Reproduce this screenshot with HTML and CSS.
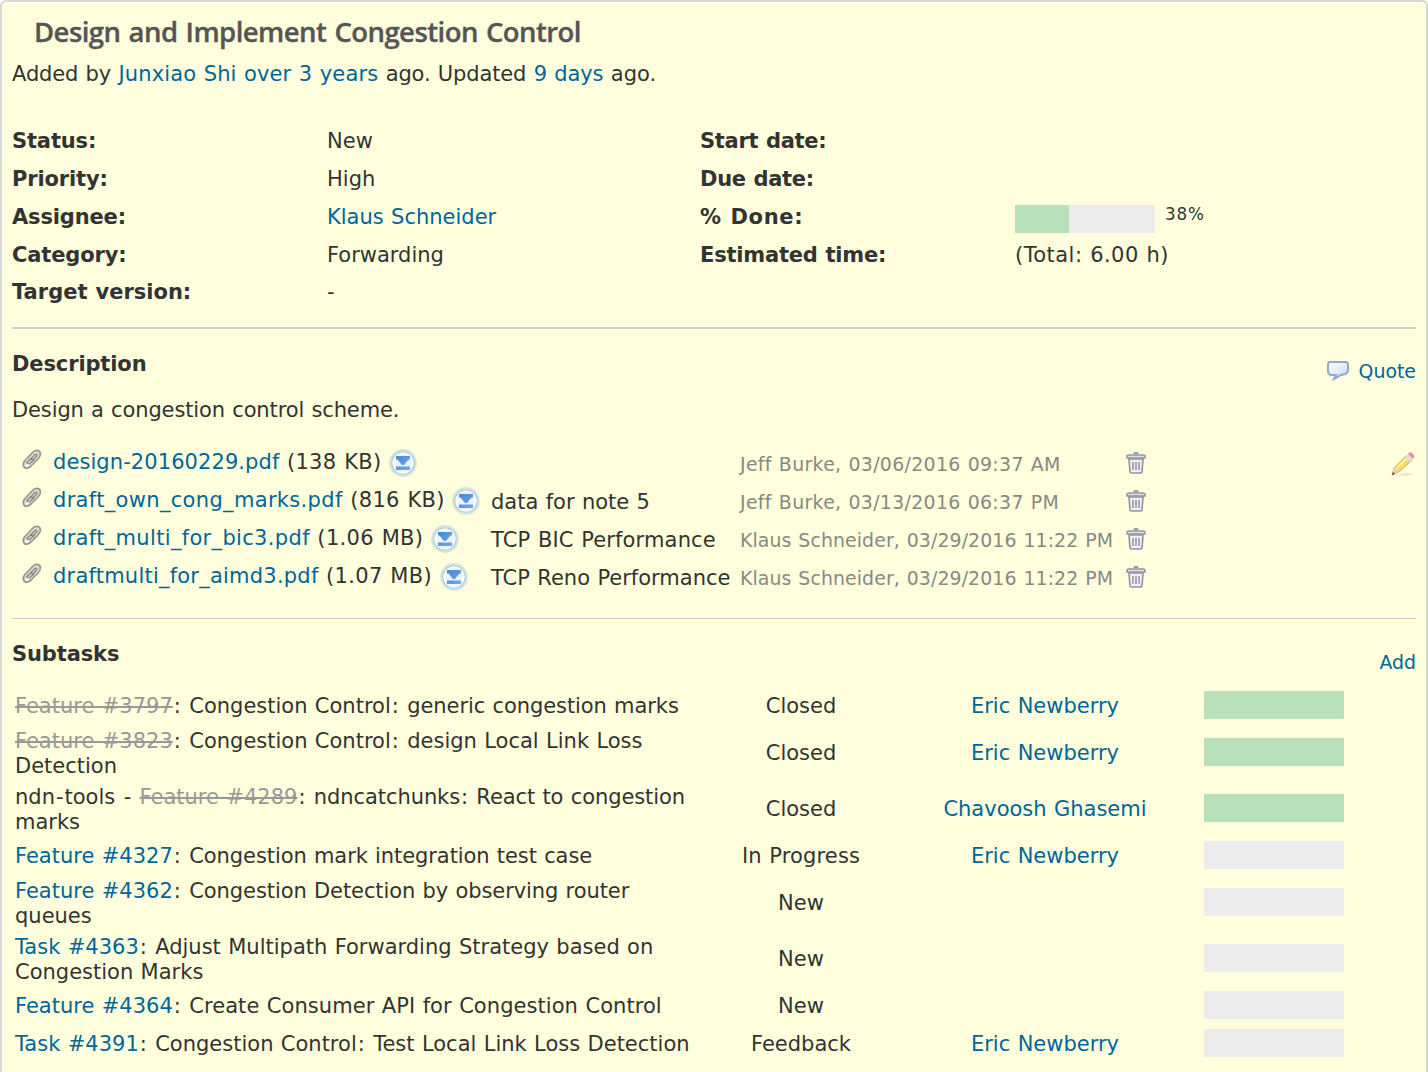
FILE: index.html
```html
<!DOCTYPE html>
<html lang="en">
<head>
<meta charset="utf-8">
<title>Design and Implement Congestion Control</title>
<link rel="stylesheet" href="styles.css">
</head>
<body>
<svg class="defs" aria-hidden="true">
  <defs>
    <linearGradient id="bubble-fill" x1="0" y1="0" x2="1" y2="1"><stop offset="0" stop-color="#fff"/><stop offset="1" stop-color="#c5dcff"/></linearGradient>
    <linearGradient id="arrow-fill" x1="0" y1="0" x2="1" y2="1"><stop offset="0" stop-color="#4388d5"/><stop offset="1" stop-color="#72aae8"/></linearGradient>
    <symbol id="clip" viewBox="0 0 20 22">
      <path d="M2.5 12 11 3Q13 1 16 1.5Q19 2.5 18.2 6Q18 8 16 10L9 17Q5 20.5 2.5 18.5Q0 16 2.5 12Z" fill="#dcdcd4" stroke="#969694" stroke-width="1.7"/>
      <path d="M4.5 14 13 5.5Q15.5 4.5 14.8 7L8.5 14Q5.5 16.5 5.5 13.5M9 9l3 3" fill="none" stroke="#858583" stroke-width="1.3"/>
      <path d="M3.5 17 7 16" stroke="#fff" stroke-width="2"/>
    </symbol>
    <symbol id="download" viewBox="0 0 28 28">
      <circle cx="14" cy="14" r="12.8" fill="#fff" stroke="#cfe6e3" stroke-width="2.2"/>
      <circle cx="14" cy="14" r="11.2" fill="#edf3ff" stroke="#b5c6d2" stroke-width="1.2"/>
      <circle cx="14" cy="14" r="9.8" fill="none" stroke="#fafcff" stroke-width="1.5"/>
      <path d="M7 7H21V10.5H19.5L15 16H13L8.5 10.5H7ZM7 17.6H21V21H7Z" fill="url(#arrow-fill)"/>
    </symbol>
    <symbol id="trash" viewBox="0 0 20 22">
      <path d="M3 7H17L16 20Q15.8 21 14 21H6Q4 21 4 20Z" fill="#f1f1f5" stroke="#9292a3" stroke-width="1.6"/>
      <path d="M1 6V4Q1 3 3 3H17Q19 3 19 4V6Z" fill="#dfdfe6" stroke="#9292a3" stroke-width="1.5"/>
      <path d="M8.5 2V1H11.5V2" fill="none" stroke="#888899" stroke-width="1.5"/>
      <path d="M7 10V18M10 10V18M13 10V18" stroke="#9292a3" stroke-width="1.5"/>
    </symbol>
  </defs>
</svg>
<main class="issue">
  <h1>Design and Implement Congestion Control</h1>
  <p class="author"><span>Added by</span> <a>Junxiao Shi</a> <a>over 3 years</a> <span>ago. Updated</span> <a class="updated">9 days</a> ago.</p>

  <section class="attributes">
    <dl>
      <dt>Status:</dt><dd>New</dd>
      <dt>Priority:</dt><dd>High</dd>
      <dt>Assignee:</dt><dd><a>Klaus Schneider</a></dd>
      <dt>Category:</dt><dd>Forwarding</dd>
      <dt class="wide">Target version:</dt><dd>-</dd>
    </dl>
    <dl class="dates">
      <dt>Start date:</dt><dd></dd>
      <dt>Due date:</dt><dd></dd>
      <dt class="ratio">% Done:</dt><dd class="done"><span class="bar"><span class="fill" style="width:38.5%"></span></span><span class="percent">38%</span></dd>
      <dt>Estimated time:</dt><dd class="total">(Total: 6.00 h)</dd>
    </dl>
  </section>

  <section class="description">
    <header><h2>Description</h2>
      <a class="action quote"><svg width="24" height="22" viewBox="0 0 24 22"><path d="M4 2H20Q22 2 22 5V10Q22 13 19 14L15 15 8 19 10 15H5Q2 14 2 11V5Q2 2 4 2Z" fill="url(#bubble-fill)" stroke="#8dabd0" stroke-width="2"/></svg><span>Quote</span></a>
    </header>
    <p>Design a congestion control scheme.</p>
    <div class="attachments">
      <div class="file"><svg class="clip"><use href="#clip"/></svg><div class="name"><a class="plain">design-20160229.pdf</a> <span>(138 KB)</span><svg class="download"><use href="#download"/></svg></div><span class="note"></span><span class="by short">Jeff Burke, 03/06/2016 09:37 AM</span><svg class="trash"><use href="#trash"/></svg>
        <svg class="pencil" viewBox="0 0 26 26"><path d="M6 24 17 22 25 23 16 25Z" fill="#e7e7ce"/><path d="M2 24 4 17 17 4 22 9 9 21Z" fill="#f6d969" stroke="#d9ae55" stroke-width="1"/><path d="M6 18 18 6" stroke="#fff0a0" stroke-width="2"/><path d="M15 6 18 3 23 8 20 11Z" fill="#d9dce5"/><path d="M18 3Q20 0 22 2L24 4Q25 6 23 8Z" fill="#f28b91"/><path d="M2 24 4 17 9 21Z" fill="#efd4ad"/><path d="M2 24 3 21 5 23Z" fill="#444"/></svg></div>
      <div class="file"><svg class="clip"><use href="#clip"/></svg><div class="name"><a>draft_own_cong_marks.pdf</a> <span>(816 KB)</span><svg class="download"><use href="#download"/></svg></div><span class="note">data for note 5</span><span class="by short">Jeff Burke, 03/13/2016 06:37 PM</span><svg class="trash"><use href="#trash"/></svg></div>
      <div class="file"><svg class="clip"><use href="#clip"/></svg><div class="name"><a>draft_multi_for_bic3.pdf</a> <span>(1.06 MB)</span><svg class="download"><use href="#download"/></svg></div><span class="note wide">TCP BIC Performance</span><span class="by">Klaus Schneider, 03/29/2016 11:22 PM</span><svg class="trash"><use href="#trash"/></svg></div>
      <div class="file"><svg class="clip"><use href="#clip"/></svg><div class="name"><a class="medium">draftmulti_for_aimd3.pdf</a> <span>(1.07 MB)</span><svg class="download"><use href="#download"/></svg></div><span class="note">TCP Reno Performance</span><span class="by">Klaus Schneider, 03/29/2016 11:22 PM</span><svg class="trash"><use href="#trash"/></svg></div>
    </div>
  </section>

  <section class="subtasks">
    <header><h2>Subtasks</h2><a class="action">Add</a></header>
    <div class="task"><p><a class="closed">Feature #3797</a><i>:</i> Congestion Control<i>:</i> <span class="tight">generic congestion marks</span></p><span>Closed</span><a>Eric Newberry</a><span class="bar"><span class="fill" style="width:100%"></span></span></div>
    <div class="task two"><p><a class="closed">Feature #3823</a><i>:</i> Congestion Control<i>:</i> design Local Link Loss<br>Detection</p><span>Closed</span><a>Eric Newberry</a><span class="bar"><span class="fill" style="width:100%"></span></span></div>
    <div class="task two"><p>ndn<i>-</i>tools <i>-</i> <a class="closed">Feature #4289</a><i>:</i> <span class="tight">ndncatchunks<i>:</i> React to congestion</span><br>marks</p><span>Closed</span><a>Chavoosh Ghasemi</a><span class="bar"><span class="fill" style="width:100%"></span></span></div>
    <div class="task"><p><a>Feature #4327</a><i>:</i> <span class="tight">Congestion mark integration test case</span></p><span class="progress">In Progress</span><a>Eric Newberry</a><span class="bar"></span></div>
    <div class="task two"><p><a>Feature #4362</a><i>:</i> <span class="tight">Congestion Detection by observing router</span><br>queues</p><span>New</span><a></a><span class="bar"></span></div>
    <div class="task two"><p><a>Task #4363</a><i>:</i> Adjust Multipath Forwarding Strategy based on<br>Congestion Marks</p><span>New</span><a></a><span class="bar"></span></div>
    <div class="task"><p><a>Feature #4364</a><i>:</i> <span class="loose">Create Consumer API for Congestion Control</span></p><span>New</span><a></a><span class="bar"></span></div>
    <div class="task"><p><a>Task #4391</a><i>:</i> Congestion Control<i>:</i> Test Local Link Loss Detection</p><span>Feedback</span><a>Eric Newberry</a><span class="bar"></span></div>
  </section>
</main>
</body>
</html>
```
FILE: styles.css
```css
* { box-sizing: border-box; }
body { margin: 0; background: #fff; }
.defs { display: block; width: 0; height: 0; }
.issue {
  height: 1072px; overflow: hidden; padding: 0 10px;
  background: #ffffdd; color: #333;
  border: 2px solid #d7d7d7; border-bottom: 0; border-radius: 6px 6px 0 0;
  font: 21px/25px Verdana, "DejaVu Sans", sans-serif;
  word-spacing: .7px; white-space: nowrap;
}
h1, h2, p, dl, dd { margin: 0; }
h1 {
  padding: 12px 0 0 22px; height: 60px;
  font: 600 27.5px/36px "Trebuchet MS", "Open Sans", sans-serif;
  color: #555; word-spacing: 1.5px; letter-spacing: -.55px;
  -webkit-text-stroke: .35px #555;
}
h2 { font-size: 21px; line-height: 25px; letter-spacing: -.12px; }
a { color: #069; }
.author { height: 60px; }
.author span { letter-spacing: -.12px; }
.author a { letter-spacing: .13px; }
.author .updated { letter-spacing: -.1px; }
.attributes { display: grid; grid-template-columns: 688px 1fr; height: 205px; }
dl { display: grid; grid-template-columns: 315px 1fr; grid-template-rows: repeat(3, 38px) 37px 38px; align-content: start; line-height: 38px; }
dt { font-weight: bold; letter-spacing: -.15px; }
dt.wide { letter-spacing: 0; }
.dates dt { letter-spacing: -.3px; }
.dates dt:last-of-type { letter-spacing: -.2px; }
.dates .ratio { letter-spacing: .7px; }
.total { letter-spacing: .44px; }
.bar { display: block; width: 140px; height: 28px; background: #ececec; }
.fill { display: block; height: 100%; background: #b8e0ba; }
.done { display: flex; gap: 10px; padding-top: 7px; }
.percent { font-size: 16.8px; line-height: 19px; letter-spacing: .8px; }
.description { height: 291px; border-top: 2px solid #ccc; padding-top: 23px; }
.description > p { letter-spacing: -.12px; }
header { display: flex; justify-content: space-between; height: 46px; }
.action { display: flex; gap: 9px; font-size: 18.9px; padding-top: 7px; }
.quote svg { margin-top: 1px; }
.attachments { padding: 26px 0 0 10px; }
.file { display: grid; grid-template-columns: 31px 438px 249px 386px 264px 26px; height: 38px; line-height: 30px; }
.name { display: flex; white-space: pre; line-height: 26px; letter-spacing: .33px; }
.name .plain { letter-spacing: .08px; }
.name .medium { letter-spacing: .22px; }
.name span { margin-left: 7.5px; }
.clip { width: 20px; height: 22px; }
.download { width: 28px; height: 28px; margin-left: 7.5px; }
.note.wide { letter-spacing: .15px; }
.by { color: #888; font-size: 18.9px; letter-spacing: .1px; }
.by.short { letter-spacing: .33px; }
.trash { width: 20px; height: 22px; margin-top: 3px; }
.pencil { width: 26px; height: 26px; margin-top: 2px; }
.subtasks { border-top: 1px solid #ccc; padding-top: 23px; }
.subtasks header { height: 44px; }
.subtasks .action { padding-top: 8px; }
.task { display: grid; grid-template-columns: 690px 198px 290px 140px; height: 38px; align-items: center; text-align: center; }
.task > :not(.bar) { padding-top: 2px; }
.task p { text-align: left; padding-left: 3px; }
.task .bar { margin-left: 14px; }
.task i { font-style: normal; padding: 0 1px; }
.tight { letter-spacing: -.08px; }
.loose { letter-spacing: .06px; }
.progress { letter-spacing: .15px; }
.two { height: 56px; }
.task.two p { padding-top: 3px; }
.closed { color: #999; text-decoration: line-through; text-decoration-thickness: 2px; }
```
